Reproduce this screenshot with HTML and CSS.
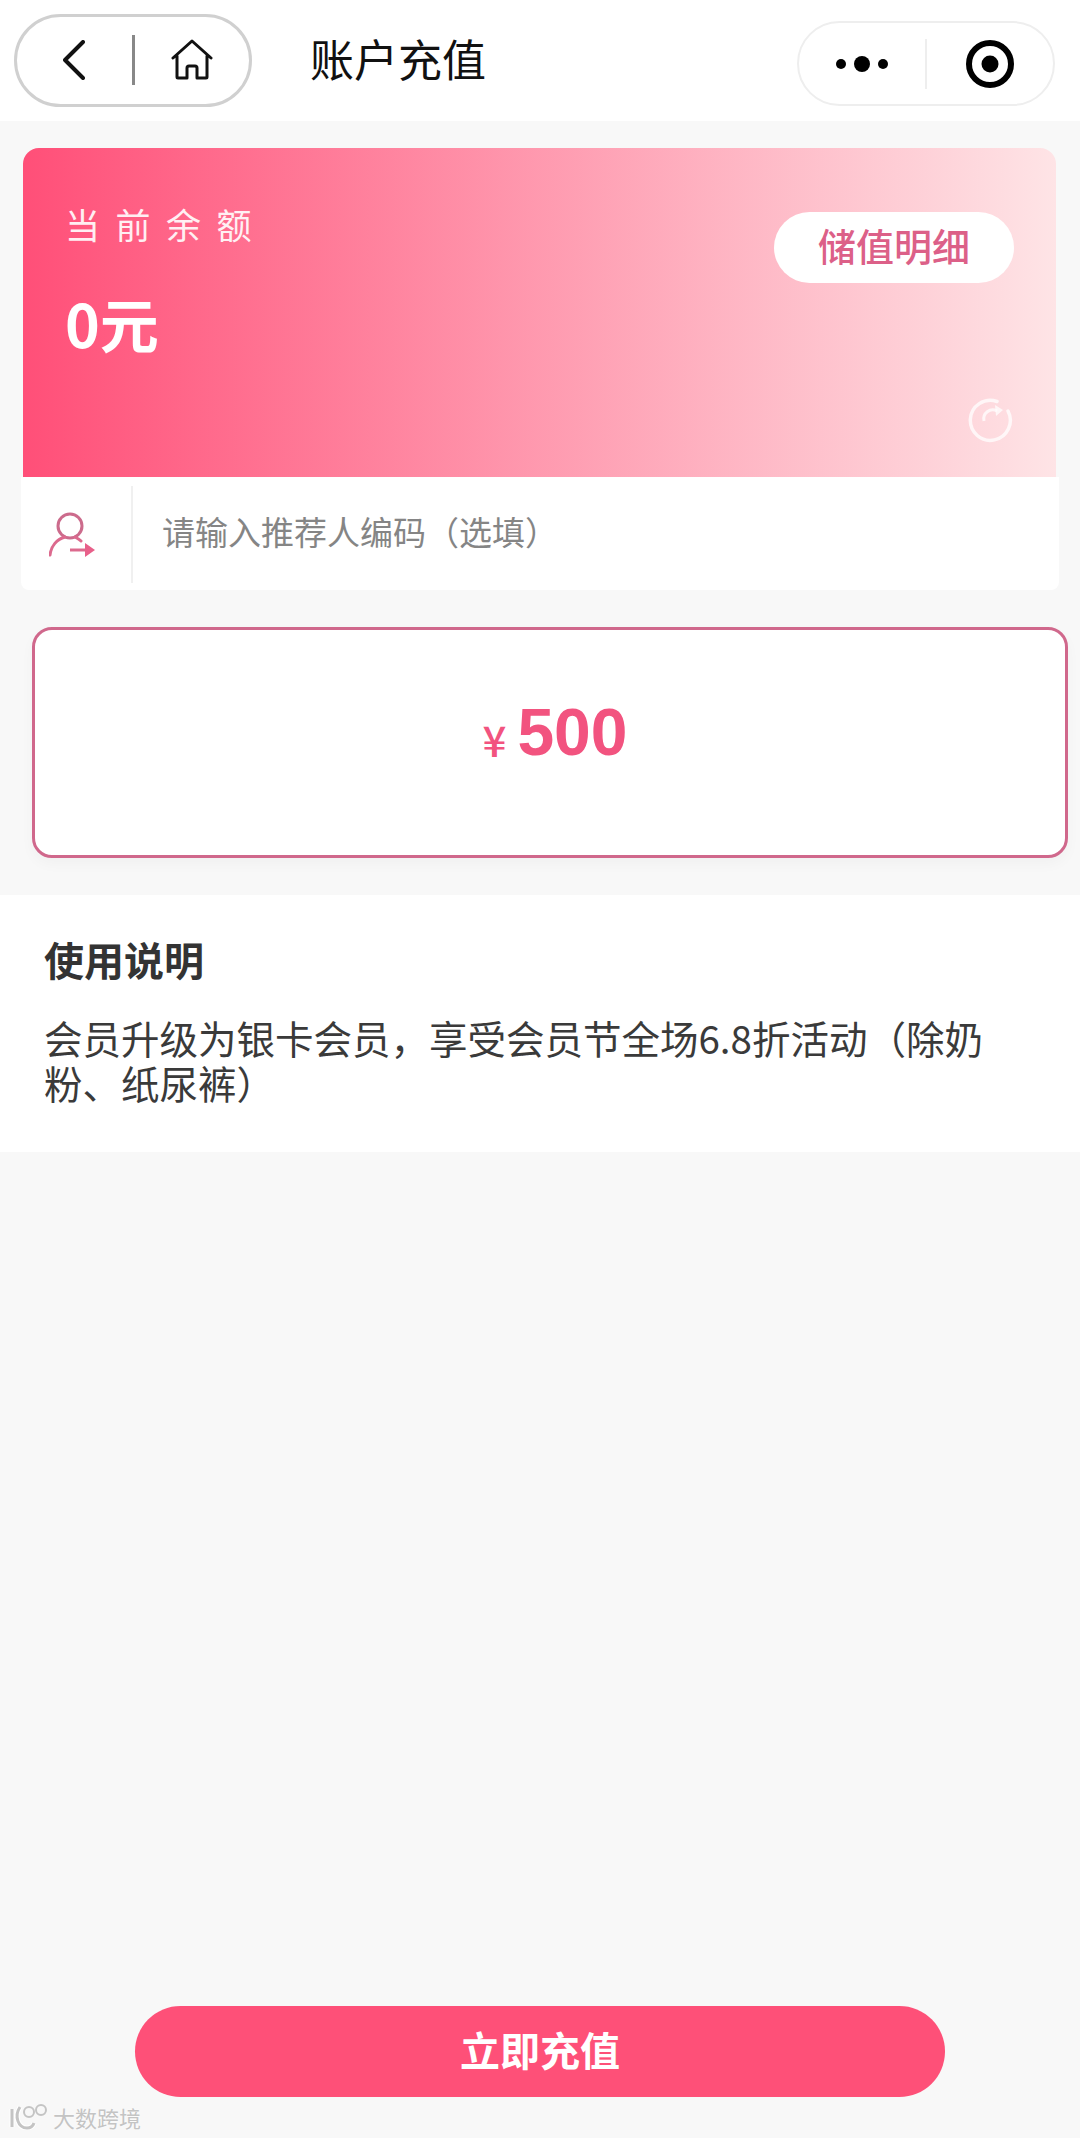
FILE: index.html
```html
<!DOCTYPE html>
<html lang="zh-CN">
<head>
    <meta charset="UTF-8">
    <meta name="viewport" content="width=device-width, initial-scale=1.0">
    <title>账户充值</title>
    <link rel="stylesheet" href="styles.css">
</head>
<body>

    <div class="header">
        <div class="nav-pill">
            <div class="nav-cell">
                <svg width="22" height="40" viewBox="0 0 22 40"><path d="M20 2 L2 20 L20 38" fill="none" stroke="#111" stroke-width="4" stroke-linecap="round" stroke-linejoin="round"/></svg>
            </div>
            <div class="nav-line"></div>
            <div class="nav-cell">
                <svg width="42" height="42" viewBox="0 0 42 42"><path d="M2 19 L21 2 L40 19 M6 17 V38 Q6 39 7 39 H16 V29 Q16 27 18 27 H24 Q26 27 26 29 V39 H35 Q36 39 36 38 V17" fill="none" stroke="#111" stroke-width="3" stroke-linecap="round" stroke-linejoin="round"/></svg>
            </div>
        </div>
        <div class="title">账户充值</div>
        <div class="menu-pill">
            <div class="menu-cell">
                <svg width="52" height="20" viewBox="0 0 52 20"><circle cx="5" cy="10" r="5" fill="#000"/><circle cx="26" cy="10" r="8" fill="#000"/><circle cx="47" cy="10" r="5" fill="#000"/></svg>
            </div>
            <div class="menu-line"></div>
            <div class="menu-cell">
                <svg width="48" height="48" viewBox="0 0 48 48"><circle cx="24" cy="24" r="21" fill="none" stroke="#000" stroke-width="6"/><circle cx="24" cy="24" r="8.5" fill="#000"/></svg>
            </div>
        </div>
    </div>

    <div class="balance-card">
        <div>
            <div class="balance-label">当前余额</div>
            <div class="balance-num">0元</div>
        </div>
        <div class="detail-btn">储值明细</div>
        <svg class="refresh" width="46" height="46" viewBox="0 0 46 46">
            <path d="M30 4.5 A20 20 0 1 0 41 14" fill="none" stroke="#fff" stroke-opacity="0.75" stroke-width="3.5" stroke-linecap="round"/>
            <path d="M17 24 A9 9 0 0 1 30 14" fill="none" stroke="#fff" stroke-opacity="0.75" stroke-width="3"/>
            <path d="M28 8 L36 13 L29 19 Z" fill="#fff" fill-opacity="0.75"/>
        </svg>
    </div>

    <div class="referrer-row">
        <div class="referrer-icon">
            <svg width="47" height="48" viewBox="0 0 47 48"><circle cx="21" cy="15" r="12" fill="none" stroke="#cc6b8c" stroke-width="3"/><path d="M1 44 C2 35 8 28 16 26 M26 26 C28 27 30 28 32 30" fill="none" stroke="#dc6a8e" stroke-width="3" stroke-linecap="round"/><path d="M21 39 H37" stroke="#dc6a8e" stroke-width="3"/><path d="M36 32 L46 39 L36 46 Z" fill="#e8608a"/></svg>
        </div>
        <div class="referrer-text">请输入推荐人编码（选填）</div>
    </div>

    <div class="amount-card">
        <span class="amount-unit">¥</span>
        <span class="amount-num">500</span>
    </div>

    <div class="notes">
        <h3>使用说明</h3>
        <p>会员升级为银卡会员，享受会员节全场6.8折活动（除奶粉、纸尿裤）</p>
    </div>

    <div class="pay-btn">立即充值</div>

    <div class="watermark">
        <svg width="40" height="26" viewBox="0 0 40 26"><path d="M3 5 V23 M11 3 C5 12 9 24 18 24 C22 24 24 22 25 19" fill="none" stroke="#fff" stroke-width="5"/><path d="M3 5 V23 M11 3 C5 12 9 24 18 24 C22 24 24 22 25 19" fill="none" stroke="#c4c4c4" stroke-width="3"/><circle cx="20" cy="8" r="5" fill="none" stroke="#c4c4c4" stroke-width="2"/><circle cx="32" cy="6" r="5" fill="none" stroke="#c4c4c4" stroke-width="2"/></svg>
        <span>大数跨境</span>
    </div>

</body>
</html>
```

FILE: styles.css
```css
* {
    box-sizing: border-box;
}
body {
    font-family: "Noto Sans CJK SC", "Liberation Sans", sans-serif;
    margin: 0;
    min-height: 2138px;
    position: relative;
    display: flex;
    flex-direction: column;
    background: #f8f8f8;
    color: #333;
}
.header {
    height: 121px;
    background: #fff;
    display: flex;
    align-items: center;
    padding-left: 14px;
    padding-right: 25px;
}
.nav-pill {
    width: 238px;
    height: 93px;
    border: 3px solid #d0d0d0;
    border-radius: 47px;
    display: flex;
    align-items: center;
    margin-top: -1px;
}
.nav-cell {
    flex: 1;
    display: flex;
    justify-content: center;
    align-items: center;
}
.nav-line {
    width: 3px;
    height: 50px;
    background: #888;
}
.title {
    margin-left: 58px;
    font-size: 44px;
    line-height: 60px;
    color: #111;
    margin-top: -6px;
}
.menu-pill {
    margin-left: auto;
    width: 258px;
    height: 85px;
    border: 2px solid #eee;
    border-radius: 43px;
    display: flex;
    align-items: center;
    margin-top: 6px;
}
.menu-cell {
    flex: 1;
    display: flex;
    justify-content: center;
    align-items: center;
}
.menu-line {
    width: 2px;
    height: 50px;
    background: #eee;
}
.balance-card {
    position: relative;
    height: 329px;
    margin: 27px 24px 0 23px;
    padding: 54px 42px 0;
    border-radius: 16px 16px 0 0;
    background: linear-gradient(to right, #ff4f78, #fee4e6);
    display: flex;
    justify-content: space-between;
    align-items: flex-start;
    color: #fff;
}
.balance-label {
    font-size: 35px;
    line-height: 44px;
    letter-spacing: 15.5px;
    opacity: 0.9;
}
.balance-num {
    margin-top: 42px;
    font-size: 59px;
    line-height: 70px;
    font-weight: 700;
}
.detail-btn {
    width: 240px;
    height: 71px;
    margin-top: 10px;
    border-radius: 36px;
    background: #fff;
    color: #dc6088;
    font-size: 38px;
    font-weight: 500;
    line-height: 66px;
    text-align: center;
}
.refresh {
    position: absolute;
    top: 249px;
    right: 43px;
}
.referrer-row {
    height: 113px;
    margin: 0 21px;
    background: #fff;
    border-radius: 0 0 8px 8px;
    display: flex;
    align-items: center;
}
.referrer-icon {
    width: 112px;
    height: 97px;
    margin-top: 2px;
    padding-left: 28px;
    border-right: 2px solid #f0f0f0;
    display: flex;
    align-items: center;
}
.referrer-text {
    margin-left: 29px;
    font-size: 33px;
    line-height: 44px;
    color: #858585;
    margin-top: -5px;
}
.amount-card {
    height: 231px;
    margin: 37px 12px 0 32px;
    padding: 0 0 22px 10px;
    border: 3px solid #d0688c;
    border-radius: 20px;
    background: #fff;
    box-shadow: 0 6px 14px rgba(0, 0, 0, 0.03);
    display: flex;
    justify-content: center;
    align-items: center;
    color: #f2537f;
}
.amount-unit {
    font-size: 42px;
    font-weight: 500;
    line-height: 60px;
    margin-top: 14px;
    margin-right: 11px;
}
.amount-num {
    font-family: "Liberation Sans", sans-serif;
    font-size: 66px;
    line-height: 80px;
    font-weight: 700;
}
.notes {
    height: 257px;
    margin-top: 37px;
    padding: 37px 44px 0;
    background: #fff;
}
.notes h3 {
    margin: 0;
    font-size: 40px;
    line-height: 54px;
    font-weight: 700;
}
.notes p {
    margin: 29px 0 0;
    font-size: 38.5px;
    line-height: 45px;
    color: #3a3a3a;
}
.pay-btn {
    width: 810px;
    height: 91px;
    margin: auto 0 41px 135px;
    border-radius: 46px;
    background: #fe5078;
    color: #fff;
    font-size: 40px;
    font-weight: 700;
    line-height: 86px;
    text-align: center;
}
.watermark {
    position: absolute;
    left: 9px;
    bottom: 6px;
    display: flex;
    align-items: center;
    gap: 4px;
    color: #c4c4c4;
    font-size: 22px;
    line-height: 30px;
    text-shadow: 0 0 2px #fff;
}
```
